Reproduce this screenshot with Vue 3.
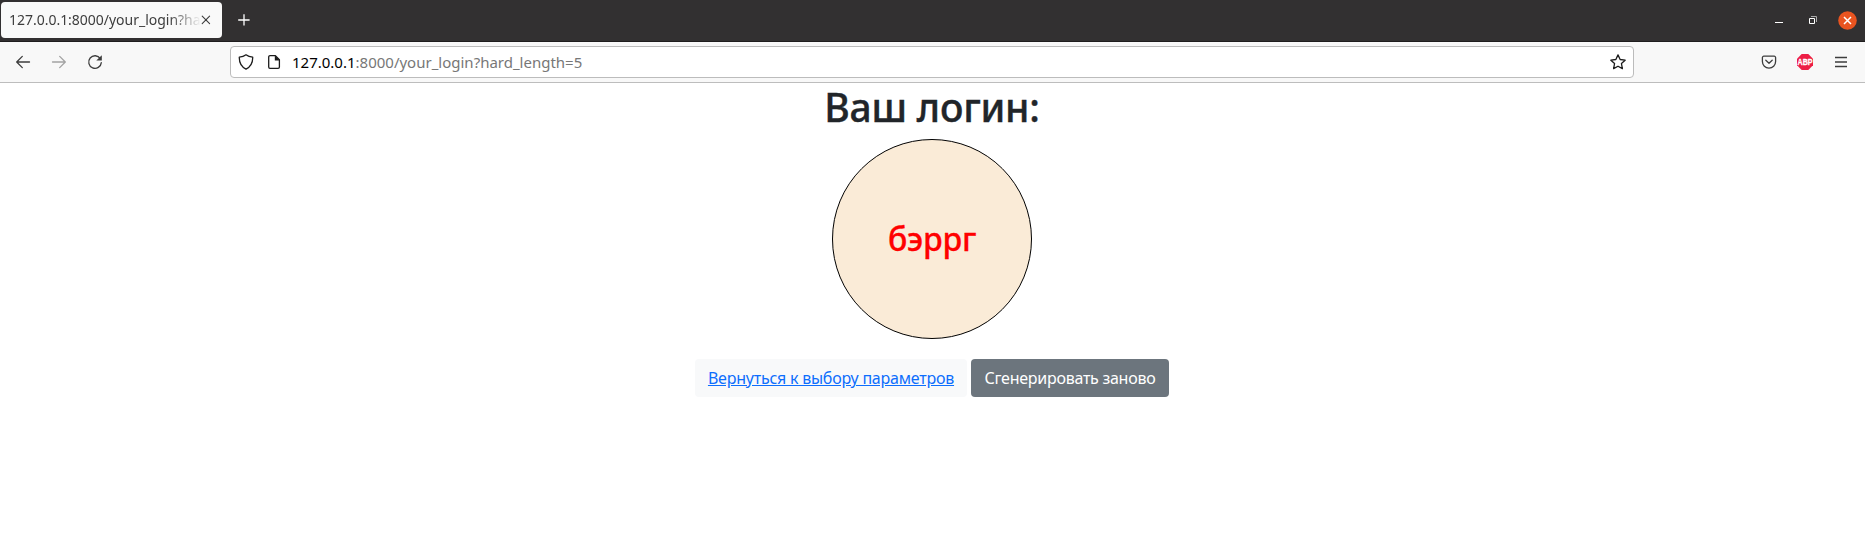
<script setup>
const host = '127.0.0.1'
const rest = ':8000/your_login?hard_length=5'
const login = 'бэррг'
</script>

<template>
  <div class="window">
    <header class="tabs">
      <div class="tab">
        <span class="tab-title">{{ host + rest }}</span>
        <svg class="tab-close" width="10" height="10" viewBox="0 0 10 10"><path d="M1.2 1.2l7.4 7.4M8.6 1.2l-7.4 7.4" /></svg>
      </div>
      <svg class="plus" width="12" height="12" viewBox="0 0 12 12"><path d="M6 .2v11.4M.2 6h11.4" /></svg>
      <div class="controls">
        <svg width="8" height="8" viewBox="0 0 8 8"><path d="M0 6.5h8" stroke="#fff" /></svg>
        <svg width="8" height="8" viewBox="0 0 8 8"><path d="M2 .5h5.5V6" stroke="#aaa" /><path d="M.5 2.5h5v5h-5z" stroke="#fff" /></svg>
        <svg class="close" width="19" height="19" viewBox="0 0 19 19"><circle cx="9.5" cy="9.5" r="9.3" fill="#e95420" /><path d="M6 6l7 7M13 6l-7 7" stroke="#fff" stroke-width="1.5" /></svg>
      </div>
    </header>

    <nav class="toolbar">
      <div class="nav-icons">
        <svg width="16" height="16" viewBox="0 0 16 16"><path d="M14.5 8H1.8M7.3 2.4L1.7 8l5.6 5.6" /></svg>
        <svg class="disabled" width="16" height="16" viewBox="0 0 16 16"><path d="M1.5 8h12.7M8.7 2.4L14.3 8l-5.6 5.6" /></svg>
        <svg width="16" height="16" viewBox="0 0 16 16"><path d="M13.3 4.6A6.3 6.3 0 1 0 14.3 8.6" /><path d="M14.8 1.2v5.2H9.3z" fill="#3d3d3d" stroke="none" /></svg>
      </div>
      <div class="address">
        <svg width="16" height="16" viewBox="0 0 16 16"><path d="M8 .8C6 2.3 3.8 2.9 1.3 3.1c-.2 5.6 2 9.7 6.7 12.1 4.700-2.400 6.900-6.500 6.700-12.100C12.200 2.900 10 2.300 8 .8z" /></svg>
        <svg class="page" width="14" height="16" viewBox="0 0 14 16"><path d="M3 1.700h5.400l4 4v7.300a1.300 1.300 0 0 1-1.300 1.300H3a1.300 1.300 0 0 1-1.300-1.300V3A1.300 1.300 0 0 1 3 1.700z" /><path d="M7.800 1.200v5.200h5z" fill="#1c1c1c" stroke="none" /></svg>
        <span class="url"><b>{{ host }}</b>{{ rest }}</span>
        <svg class="star" width="16" height="16" viewBox="0 0 16 16"><path d="M8 .9l2.150 4.600 5 .65-3.700 3.450.95 5L8 12.200l-4.400 2.400.95-5L.85 6.150l5-.65z" /></svg>
      </div>
      <div class="extras">
        <svg width="16" height="16" viewBox="0 0 16 16"><path d="M2.800 2.200h10.400a1.400 1.400 0 0 1 1.400 1.400v3.900a6.600 6.600 0 0 1-13.200 0V3.600a1.400 1.400 0 0 1 1.400-1.400zM4.800 6.300L8 9.200l3.200-2.900" /></svg>
        <svg width="16" height="16" viewBox="0 0 16 16"><path d="M4.700 0h6.600L16 4.700v6.600L11.300 16H4.700L0 11.300V4.700z" fill="#ed1e45" stroke="none" /><text x="8" y="11" text-anchor="middle" textLength="15" lengthAdjust="spacingAndGlyphs">ABP</text></svg>
        <svg width="12" height="12" viewBox="0 0 12 12"><path d="M0 1.500h12M0 6h12M0 10.500h12" /></svg>
      </div>
    </nav>

    <main>
      <h1>Ваш логин:</h1>
      <div class="circle">{{ login }}</div>
      <div class="actions">
        <button class="back">Вернуться к выбору параметров</button>
        <button class="again">Сгенерировать заново</button>
      </div>
    </main>
  </div>
</template>

<style>
body { background: #fff; }
</style>

<style scoped>
* { box-sizing: border-box; }
.window { height: 545px; overflow: hidden; font-family: "Noto Sans", sans-serif; }
svg { display: block; flex: none; fill: none; stroke: #3d3d3d; stroke-width: 1.3; stroke-linecap: round; stroke-linejoin: round; }
.tabs { display: flex; align-items: center; height: 42px; padding: 0 8px 1px 1px; background: #323031; border-bottom: 1px solid #1f1d1e; }
.tab { display: flex; align-items: center; width: 221px; height: 36px; padding: 0 11px 0 8px; border-radius: 4px; background: #f9f9f9; }
.tab-title { width: 191px; overflow: hidden; white-space: nowrap; color: #3d3d3d; font-size: 14px; line-height: 20px; letter-spacing: -0.02px; -webkit-mask-image: linear-gradient(to right, #000 160px, transparent 192px); mask-image: linear-gradient(to right, #000 160px, transparent 192px); }
.tab-close { margin-left: 1px; stroke-width: 1.1; }
.plus { margin-left: 16px; stroke: #fff; stroke-linecap: butt; }
.controls { display: flex; align-items: center; gap: 26px; margin-left: auto; }
.controls svg { stroke-width: 1; stroke-linecap: butt; stroke-linejoin: miter; }
.controls .close { margin-left: -5px; stroke: none; }
.toolbar { display: flex; align-items: center; height: 41px; background: #f8f8f8; border-bottom: 1px solid #bdbdbd; }
.nav-icons { display: flex; gap: 20px; width: 230px; padding-left: 15px; }
.disabled { opacity: .45; }
.address { display: flex; align-items: center; width: 1404px; height: 32px; padding: 0 7px; border: 1px solid #bcbcbc; border-radius: 4px; background: #fff; }
.address svg { stroke: #1c1c1c; }
.page { margin-left: 13px; }
.url { margin-left: 11px; color: #777; font-size: 15px; line-height: 20px; white-space: nowrap; }
.url b { color: #000; font-weight: 400; }
.star { margin-left: auto; }
.extras { display: flex; align-items: center; gap: 20px; margin-left: 127px; }
.extras svg:last-child { stroke-linecap: butt; margin-left: 2px; }
.extras text { fill: #fff; stroke: #fff; stroke-width: .3; font: 700 8.5px "Liberation Sans", sans-serif; }
main { display: flex; flex-direction: column; align-items: center; width: 1864px; color: #212529; }
h1 { margin: 0; height: 56px; font-size: 39px; line-height: 48px; font-weight: 500; letter-spacing: -0.2px; white-space: nowrap; -webkit-text-stroke: .4px #212529; }
.circle { display: flex; align-items: center; justify-content: center; width: 200px; height: 200px; border: 1px solid #000; border-radius: 50%; background: #faebd7; color: red; font-size: 32px; font-weight: 500; line-height: 40px; letter-spacing: -0.2px; -webkit-text-stroke: .3px red; }
.actions { display: flex; gap: 4px; margin-top: 20px; }
button { display: flex; align-items: center; justify-content: center; height: 38px; padding: 0; border: 0; border-radius: 4px; font: 16px/24px "Noto Sans", sans-serif; white-space: nowrap; }
.back { width: 272px; color: #0d6efd; background: #f8f9fa; text-decoration: underline; letter-spacing: -0.22px; }
.again { width: 198px; color: #fff; background: #6c757d; letter-spacing: -0.26px; }
</style>
